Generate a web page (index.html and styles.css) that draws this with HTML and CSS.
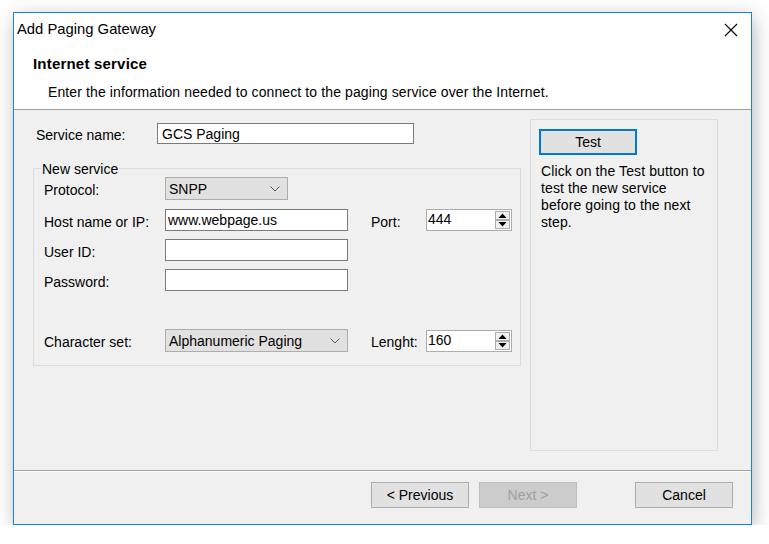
FILE: index.html
```html
<!DOCTYPE html>
<html>
<head>
<meta charset="utf-8">
<link rel="stylesheet" href="styles.css">
</head>
<body>
<div class="window">
  <div class="titlebar">
    <span class="title">Add Paging Gateway</span>
    <span class="close"><svg width="14" height="14" viewBox="0 0 14 14"><path d="M1 1 L13 13 M13 1 L1 13" stroke="#000" stroke-width="1.1" fill="none"/></svg></span>
  </div>
  <div class="header">
    <div class="h-title">Internet service</div>
    <div class="h-desc">Enter the information needed to connect to the paging service over the Internet.</div>
  </div>
  <div class="content">
    <div class="left">
      <div class="svc-row">
        <span class="svc-label">Service name:</span>
        <span class="input svc-input">GCS Paging</span>
      </div>
      <fieldset class="group">
        <legend>New service</legend>
        <div class="row r1">
          <span class="label">Protocol:</span>
          <span class="select proto"><span>SNPP</span><svg class="chev" width="10" height="6" viewBox="0 0 10 6"><path d="M0.5 0.5 L5 5 L9.5 0.5" stroke="#555" fill="none"/></svg></span>
        </div>
        <div class="row r2">
          <span class="label">Host name or IP:</span>
          <span class="input wide">www.webpage.us</span>
          <span class="label2">Port:</span>
          <span class="spin"><span class="spin-val">444</span><span class="arrows"><span class="arr"><svg width="9" height="5" viewBox="0 0 9 5"><path d="M0.5 5 L4.5 0.5 L8.5 5 Z" fill="#000"/></svg></span><span class="arr"><svg width="9" height="5" viewBox="0 0 9 5"><path d="M0.5 0 L4.5 4.5 L8.5 0 Z" fill="#000"/></svg></span></span></span>
        </div>
        <div class="row r3">
          <span class="label">User ID:</span>
          <span class="input wide"></span>
        </div>
        <div class="row r4">
          <span class="label">Password:</span>
          <span class="input wide"></span>
        </div>
        <div class="row r5">
          <span class="label">Character set:</span>
          <span class="select wide"><span>Alphanumeric Paging</span><svg class="chev" width="10" height="6" viewBox="0 0 10 6"><path d="M0.5 0.5 L5 5 L9.5 0.5" stroke="#555" fill="none"/></svg></span>
          <span class="label2">Lenght:</span>
          <span class="spin"><span class="spin-val">160</span><span class="arrows"><span class="arr"><svg width="9" height="5" viewBox="0 0 9 5"><path d="M0.5 5 L4.5 0.5 L8.5 5 Z" fill="#000"/></svg></span><span class="arr"><svg width="9" height="5" viewBox="0 0 9 5"><path d="M0.5 0 L4.5 4.5 L8.5 0 Z" fill="#000"/></svg></span></span></span>
        </div>
      </fieldset>
    </div>
    <div class="right">
      <div class="btn test">Test</div>
      <div class="help">Click on the Test button to<br>test the new service<br>before going to the next<br>step.</div>
    </div>
  </div>
  <div class="footer">
    <div class="btn">&lt; Previous</div>
    <div class="btn disabled">Next &gt;</div>
    <div class="btn cancel">Cancel</div>
  </div>
</div>
</body>
</html>
```

FILE: styles.css
```css
* { box-sizing: border-box; }
html, body { margin: 0; padding: 0; background: #fff; }
body {
  font-family: "Liberation Sans", Arial, sans-serif;
  font-size: 14px;
  color: #000;
  padding: 12px 0 0 13px;
}
.window {
  width: 739px;
  height: 513px;
  border: 1px solid #1883d7;
  background: #f0f0f0;
  box-shadow: 2px 5px 18px rgba(0,0,0,0.28);
  display: flex;
  flex-direction: column;
}
.titlebar {
  height: 32px;
  background: #fff;
  display: flex;
  align-items: center;
  justify-content: space-between;
  padding: 0 13px 0 3px;
}
.title {
  font-size: 14.8px;
  letter-spacing: 0;
}
.close { display: flex; width: 14px; height: 14px; margin-top: 1px; }
.header {
  background: #fff;
  height: 65px;
  border-bottom: 1px solid #a0a0a0;
  padding: 11px 0 0 19px;
}
.h-title {
  font-weight: bold;
  font-size: 15px;
  line-height: 16px;
  letter-spacing: 0.2px;
}
.h-desc {
  line-height: 16px;
  margin-top: 12px;
  padding-left: 15px;
  letter-spacing: 0.11px;
}
.content {
  flex: 1;
  display: flex;
  padding: 9px 0 0 19px;
  gap: 9px;
  border-bottom: 1px solid #a0a0a0;
}
.left { width: 488px; }
.svc-row {
  display: flex;
  align-items: center;
  height: 21px;
  margin-top: 4px;
  padding-left: 3px;
}
.svc-label { width: 121px; padding-top: 3px; }
.input {
  display: flex;
  align-items: center;
  height: 22px;
  background: #fff;
  border: 1px solid #7a7a7a;
  padding: 0 2px;
  line-height: 16px;
}
.svc-input { width: 257px; height: 21px; padding-left: 4px; }
.group {
  margin: 16px 0 0 0;
  padding: 0 0 13px 10px;
  border: 1px solid #dcdcdc;
  height: 206px;
}
.group legend {
  padding: 0 1px;
  margin-left: -3px;
  line-height: 16px;
  font-size: 14px;
  position: relative;
  top: 1px;
}
.row {
  display: flex;
  align-items: center;
}
.r1 { margin-top: 1px; height: 23px; }
.r2 { margin-top: 9px; height: 22px; }
.r3 { margin-top: 8px; height: 22px; }
.r4 { margin-top: 8px; height: 22px; }
.r5 { margin-top: 38px; height: 23px; }
.label { width: 121px; padding-top: 3px; }
.label2 { width: 55px; margin-left: 23px; padding-top: 3px; }
.wide { width: 183px; }
.select {
  display: flex;
  align-items: center;
  justify-content: space-between;
  height: 23px;
  background: #e1e1e1;
  border: 1px solid #adadad;
  padding: 0 7px 0 3px;
}
.select.proto { width: 123px; }
.chev { margin-top: 1px; }
.spin {
  display: flex;
  align-items: center;
  justify-content: space-between;
  width: 86px;
  height: 22px;
  background: #fff;
  border: 1px solid #adadad;
  padding: 0 1px 0 1px;
}
.spin-val { line-height: 16px; margin-top: -2px; }
.arrows {
  display: flex;
  flex-direction: column;
  gap: 0;
  height: 18px;
}
.arr {
  width: 15px;
  height: 9px;
  border: 1px solid #adadad;
  background: #f0f0f0;
  display: flex;
  align-items: center;
  justify-content: center;
}
.right {
  width: 188px;
  height: 332px;
  border: 1px solid #dcdcdc;
  padding: 9px 0 0 8px;
}
.btn {
  width: 98px;
  height: 26px;
  background: #e1e1e1;
  border: 1px solid #adadad;
  display: flex;
  align-items: center;
  justify-content: center;
  line-height: 16px;
}
.btn.test {
  border: 2px solid #0078d7;
  height: 26px;
}
.help {
  margin-top: 8px;
  padding-left: 2px;
  line-height: 17px;
  letter-spacing: 0.1px;
}
.footer {
  height: 53px;
  display: flex;
  padding: 10px 0 0 357px;
  gap: 10px;
  border-top: 1px solid #fff;
}
.btn.disabled {
  background: #cccccc;
  border-color: #bfbfbf;
  color: #a0a0a0;
}
.btn.cancel { margin-left: 48px; }
```
